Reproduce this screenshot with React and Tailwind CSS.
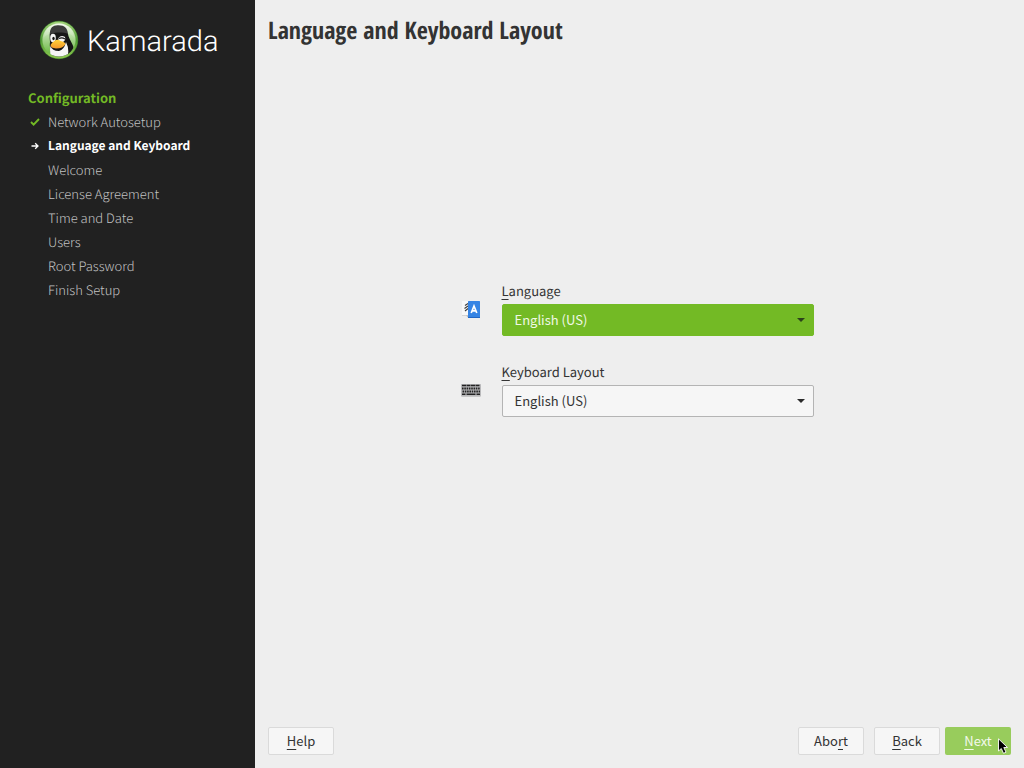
import React from "react";

const steps = [
  { label: "Network Autosetup", state: "done" },
  { label: "Language and Keyboard", state: "current" },
  { label: "Welcome" },
  { label: "License Agreement" },
  { label: "Time and Date" },
  { label: "Users" },
  { label: "Root Password" },
  { label: "Finish Setup" },
];

function Logo() {
  return (
    <svg viewBox="0 0 40 40" className="size-10 shrink-0" aria-hidden="true">
      <defs>
        <linearGradient id="ring" x1="0" y1="0" x2="0" y2="1">
          <stop offset="0" stopColor="#a5d67c" />
          <stop offset="0.5" stopColor="#4f9a35" />
          <stop offset="1" stopColor="#8fc94f" />
        </linearGradient>
        <linearGradient id="disc" x1="0" y1="0" x2="0" y2="1">
          <stop offset="0" stopColor="#f3faec" />
          <stop offset="0.5" stopColor="#a5d48c" />
          <stop offset="1" stopColor="#5fb336" />
        </linearGradient>
        <linearGradient id="beak" x1="0" y1="0" x2="0" y2="1">
          <stop offset="0" stopColor="#ffd23a" />
          <stop offset="1" stopColor="#f5982a" />
        </linearGradient>
        <clipPath id="inside">
          <circle cx="20" cy="20" r="16.500" />
        </clipPath>
      </defs>
      <circle cx="20" cy="20" r="19.200" fill="#39752a" />
      <circle cx="20" cy="20" r="18.600" fill="url(#ring)" />
      <circle cx="20" cy="20" r="16.600" fill="url(#disc)" />
      <g clipPath="url(#inside)">
        <path d="M11 22C10 12 11 6 17 5.500C25 4.500 28.500 8 29 14C30 20 35 24 35 31L28 38H14Q10 30 11 22Z" fill="#161616" />
        <path d="M11.500 26Q13 31 20 31Q25 30 27 22Q31 30 28 38H13Q10 32 11.500 26Z" fill="#f5f5f5" />
        <ellipse cx="14" cy="18" rx="2.800" ry="4.200" fill="#f5f5f5" />
        <ellipse cx="14.500" cy="18.500" rx="1.200" ry="1.800" fill="#111" />
        <path d="M19.500 18Q22 14.500 26 17Q27 20 24 22H20Q19 20 19.500 18Z" fill="#f5f5f5" />
        <path d="M20 18.500Q23 17 26 19" fill="none" stroke="#161616" strokeWidth="1.200" />
        <path d="M16 20.500Q19 19 21.500 21Q26 22 26.500 24Q24 28.500 17 28.500Q11.500 28 11.500 25Q13 22 16 20.500Z" fill="url(#beak)" />
      </g>
      <path d="M5 17C6 8 13 3 20 3S34 8 35 17C30 11 12 11 5 17Z" fill="#fff" opacity="0.160" />
    </svg>
  );
}

function CheckIcon() {
  return (
    <svg viewBox="0 0 10 8" className="h-2 w-2.5" aria-hidden="true">
      <path d="M1 4L3.600 6.600L9 1" fill="none" stroke="#73ba25" strokeWidth="1.900" />
    </svg>
  );
}

function ArrowIcon() {
  return (
    <svg viewBox="0 0 10 8" className="h-2 w-2.5" aria-hidden="true">
      <path d="M1.500 4H8M5.200 1.200L8 4L5.200 6.800" fill="none" stroke="#fff" strokeWidth="1.300" />
    </svg>
  );
}

function TranslateIcon() {
  return (
    <svg viewBox="0 0 22 22" className="size-[22px] shrink-0" aria-hidden="true">
      <path d="M2 4H11V18.500H2Z" fill="#f8f8f8" />
      <path d="M2 18.500H8" stroke="#d5d5d5" />
      <path d="M5 8.500L8 6.500M4.500 11.500L8 9M5 14L8 11.500" fill="none" stroke="#3c3c3c" strokeWidth="1.100" />
      <path d="M6 18.500H8V20.500Z" fill="#b5b5b5" />
      <rect x="8" y="4" width="12" height="17" rx="0.500" fill="#3584e4" />
      <path d="M8 20.500H20" stroke="#2167c4" />
      <path d="M11.200 16L14 9L16.800 16M12.200 13.800H16" fill="none" stroke="#fff" strokeWidth="1.700" />
    </svg>
  );
}

function KeyboardIcon() {
  return (
    <svg viewBox="0 0 22 22" className="size-[22px] shrink-0" aria-hidden="true">
      <rect x="1" y="6" width="20" height="13" rx="1.500" fill="#c6c6c6" />
      <rect x="1" y="6" width="20" height="12" rx="1" fill="#b9b9bb" />
      <path d="M2 7.500H20" stroke="#222" strokeWidth="1.600" strokeDasharray="4 0.500" />
      <path d="M2 10.500H20" stroke="#222" strokeWidth="1.800" strokeDasharray="1.600 0.700" />
      <path d="M2.500 13.500H20" stroke="#222" strokeWidth="1.800" strokeDasharray="1.600 0.700" />
      <path d="M2 16.300H5.500M6.500 16.300H15.500M16.500 16.300H20" stroke="#222" strokeWidth="1.600" />
    </svg>
  );
}

function Hotkey({ children }) {
  return <span className="underline decoration-1 underline-offset-3 [text-decoration-skip-ink:none]">{children}</span>;
}

function Field({ id, icon, label, active }) {
  return (
    <div className="flex items-center gap-5">
      {icon}
      <div className="flex flex-1 flex-col">
        <label htmlFor={id} className="h-6 leading-[22px]">
          <Hotkey>{label[0]}</Hotkey>
          {label.slice(1)}
        </label>
        <div className="relative">
          <select
            id={id}
            defaultValue="en_US"
            className={
              active
                ? "block h-8 w-full appearance-none rounded-xs border border-[#73ba25] bg-[#73ba25] px-3 text-[#f0f8e6] outline-none"
                : "block h-8 w-full appearance-none rounded-xs border border-[#b4b4b4] bg-[#f6f6f6] px-3 text-[#333] outline-none"
            }
          >
            <option value="en_US">English (US)</option>
          </select>
          <svg viewBox="0 0 8 4" className="pointer-events-none absolute top-3.5 right-[9px] h-1 w-2" aria-hidden="true">
            <path d="M0 0H8L4 4Z" fill={active ? "#2c421b" : "#2b2b2b"} />
          </svg>
        </div>
      </div>
    </div>
  );
}

function Pointer() {
  return (
    <svg viewBox="0 0 10 16" className="pointer-events-none absolute right-[3px] top-[11px] h-4 w-2.5" aria-hidden="true">
      <path d="M0.500 0.800V13L3.300 10.500L5.500 15.300L8 14.200L5.800 9.500H9.500Z" fill="#000" stroke="#fff" strokeWidth="0.900" />
    </svg>
  );
}

const plainButton = "h-7 w-[66px] rounded-xs border border-[#dadada] bg-[#f6f6f6] text-[#333]";

export default function App() {
  return (
    <div className="flex min-h-screen bg-[#eeeeee] font-['Noto_Sans_CJK_SC',sans-serif] text-[13px] text-[#333] [text-rendering:geometricPrecision]">
      <aside className="w-[255px] shrink-0 bg-[#212121] pt-5">
        <div className="flex h-10 items-center gap-2 pl-[39px] text-white">
          <Logo />
          <span className="pt-1 font-['Roboto',sans-serif] text-[29px] leading-10 font-light">Kamarada</span>
        </div>
        <nav className="pt-[26px] pl-7 leading-6">
          <h2 className="font-bold text-[#73ba25]">Configuration</h2>
          <ol>
            {steps.map(({ label, state }) => (
              <li
                key={label}
                aria-current={state === "current" ? "step" : undefined}
                className={state === "current" ? "flex items-center text-[12px] font-bold text-white" : "flex items-center font-light text-[#c3c3c3]"}
              >
                <span className="flex w-5 pl-0.5">
                  {state === "done" && <CheckIcon />}
                  {state === "current" && <ArrowIcon />}
                </span>
                {label}
              </li>
            ))}
          </ol>
        </nav>
      </aside>
      <main className="flex flex-1 flex-col p-[13px]">
        <h1 className="font-['Open_Sans_Condensed','Noto_Sans_Condensed','Liberation_Sans_Narrow',sans-serif] text-[24px] leading-9 font-bold">
          Language and Keyboard Layout
        </h1>
        <form className="flex flex-1 flex-col items-center justify-center pb-20">
          <div className="flex w-full max-w-[360px] flex-col gap-[25px] pr-1.5">
            <Field id="language" icon={<TranslateIcon />} label="Language" active />
            <Field id="keyboard" icon={<KeyboardIcon />} label="Keyboard Layout" />
          </div>
        </form>
        <footer className="flex items-center">
          <button type="button" className={plainButton}>
            <Hotkey>H</Hotkey>elp
          </button>
          <button type="button" className={"ml-auto " + plainButton}>
            Abo<Hotkey>r</Hotkey>t
          </button>
          <button type="button" className={"ml-2.5 " + plainButton}>
            <Hotkey>B</Hotkey>ack
          </button>
          <button type="button" className="relative ml-[5px] h-7 w-[66px] rounded-xs bg-[#98cc5c] text-[#f3f9ec]">
            <Hotkey>N</Hotkey>ext
            <Pointer />
          </button>
        </footer>
      </main>
    </div>
  );
}
